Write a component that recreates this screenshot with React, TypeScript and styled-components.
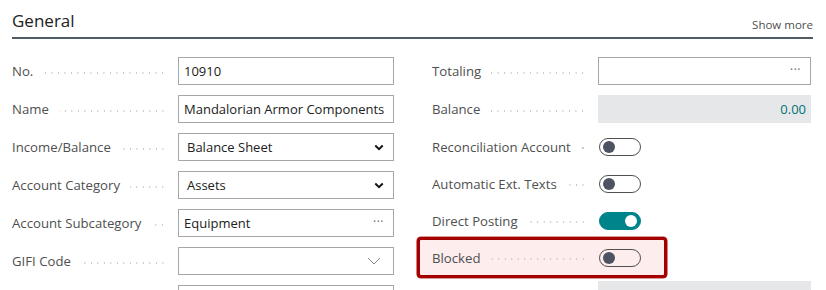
import React from "react";
import styled, { createGlobalStyle, css } from "styled-components";

const GlobalStyle = createGlobalStyle`
  html, body {
    margin: 0;
    padding: 0;
    background: #ffffff;
  }
  body {
    font-family: "Open Sans", "Noto Sans", Arial, sans-serif;
    color: #212121;
    overflow: hidden;
  }
`;

const Page = styled.div`
  width: 826px;
  height: 290px;
  padding: 0 13px 0 12px;
  box-sizing: border-box;
  overflow: hidden;
`;

const Header = styled.div`
  display: flex;
  align-items: flex-end;
  justify-content: space-between;
  height: 39px;
  border-bottom: 2px solid #505c66;
  box-sizing: border-box;
  padding-bottom: 5px;
`;

const Title = styled.h2`
  margin: 0;
  font-size: 17px;
  font-weight: 400;
  color: #212121;
`;

const ShowMore = styled.span`
  font-size: 11.5px;
  color: #505050;
`;

const Columns = styled.div`
  display: grid;
  grid-template-columns: 381px 1fr;
  column-gap: 39px;
  padding-top: 13px;
`;

const Column = styled.div`
  display: flex;
  flex-direction: column;
`;

const Row = styled.div<{ $compact?: boolean }>`
  display: grid;
  grid-template-columns: 166px 1fr;
  align-items: center;
  height: ${(p) => (p.$compact ? 37 : 38)}px;
`;

const Highlight = styled.div`
  margin: -2px 0 -2px -15px;
  width: 250px;
  box-sizing: border-box;
  border: 3px solid #a40000;
  border-radius: 4px;
  background: #fdeded;
  padding-left: 12px;
  box-shadow: 0 0 0 0.6px #b03030;

  & > ${Row} {
    height: 35px;
  }
`;

const Label = styled.div`
  display: flex;
  align-items: center;
  font-size: 13.2px;
  color: #4f4f4f;
  padding-right: 12px;
  white-space: nowrap;
`;

const Leader = styled.span`
  flex: 1;
  height: 2px;
  margin: 3px 0 0 10px;
  background-image: radial-gradient(circle, #c4c4c4 0.7px, transparent 1px);
  background-size: 6.5px 2px;
  background-repeat: repeat-x;
  background-position: right center;
`;

const boxBase = css`
  height: 28px;
  box-sizing: border-box;
  display: flex;
  align-items: center;
  font-size: 13px;
  color: #212121;
  white-space: nowrap;
  overflow: hidden;
`;

const TextBox = styled.div<{ $tight?: boolean; $width?: number }>`
  ${boxBase};
  border: 1px solid #a6a6a6;
  padding: 0 9px 0 ${(p) => (p.$tight ? 5 : 8)}px;
  background: #fff;
  justify-content: space-between;
  width: ${(p) => p.$width ?? 216}px;
`;

const ReadOnly = styled.div`
  ${boxBase};
  background: #e6e7e9;
  justify-content: flex-end;
  padding-right: 5px;
  color: #00727a;
  width: 213px;
`;

const Dots = styled.span`
  color: #6a6a6a;
  font-size: 12px;
  letter-spacing: 0.5px;
  margin-top: -4px;
`;

const Toggle = styled.div<{ $on?: boolean }>`
  width: 42px;
  height: 18px;
  box-sizing: border-box;
  border-radius: 9px;
  display: flex;
  align-items: center;
  padding: 0 3px;
  justify-content: ${(p) => (p.$on ? "flex-end" : "flex-start")};
  border: 1.5px solid ${(p) => (p.$on ? "#00848b" : "#505050")};
  background: ${(p) => (p.$on ? "#00848b" : "transparent")};
  margin-left: 1px;

  &::after {
    content: "";
    width: 12px;
    height: 12px;
    border-radius: 50%;
    background: ${(p) => (p.$on ? "#ffffff" : "#4d5363")};
  }
`;

const BoldChevron = () => (
  <svg width="10" height="7" viewBox="0 0 10 7">
    <path d="M1.3 1.5 L5 5.2 L8.7 1.5" fill="none" stroke="#111" strokeWidth="1.9" />
  </svg>
);

const ThinChevron = () => (
  <svg width="14" height="8" viewBox="0 0 14 8" style={{ marginRight: 3 }}>
    <path d="M1 1 L7 7 L13 1" fill="none" stroke="#8a8a8a" strokeWidth="1" />
  </svg>
);

const Field = ({ label, children, compact }: { label: string; children?: React.ReactNode; compact?: boolean }) => (
  <Row $compact={compact}>
    <Label>
      {label}
      <Leader />
    </Label>
    <div>{children}</div>
  </Row>
);

export default function App() {
  return (
    <>
      <GlobalStyle />
      <Page>
        <Header>
          <Title>General</Title>
          <ShowMore>Show more</ShowMore>
        </Header>
        <Columns>
          <Column>
            <Field label="No.">
              <TextBox $tight>10910</TextBox>
            </Field>
            <Field label="Name">
              <TextBox $tight>Mandalorian Armor Components</TextBox>
            </Field>
            <Field label="Income/Balance">
              <TextBox>
                Balance Sheet
                <BoldChevron />
              </TextBox>
            </Field>
            <Field label="Account Category">
              <TextBox>
                Assets
                <BoldChevron />
              </TextBox>
            </Field>
            <Field label="Account Subcategory">
              <TextBox $tight>
                Equipment
                <Dots>···</Dots>
              </TextBox>
            </Field>
            <Field label="GIFI Code">
              <TextBox>
                <span />
                <ThinChevron />
              </TextBox>
            </Field>
            <Field label="">
              <TextBox />
            </Field>
          </Column>
          <Column>
            <Field label="Totaling">
              <TextBox $width={213}>
                <span />
                <Dots>···</Dots>
              </TextBox>
            </Field>
            <Field label="Balance">
              <ReadOnly>0.00</ReadOnly>
            </Field>
            <Field label="Reconciliation Account" compact>
              <Toggle />
            </Field>
            <Field label="Automatic Ext. Texts" compact>
              <Toggle />
            </Field>
            <Field label="Direct Posting" compact>
              <Toggle $on />
            </Field>
            <Highlight>
              <Field label="Blocked" compact>
                <Toggle />
              </Field>
            </Highlight>
            <Field label="">
              <ReadOnly />
            </Field>
          </Column>
        </Columns>
      </Page>
    </>
  );
}
